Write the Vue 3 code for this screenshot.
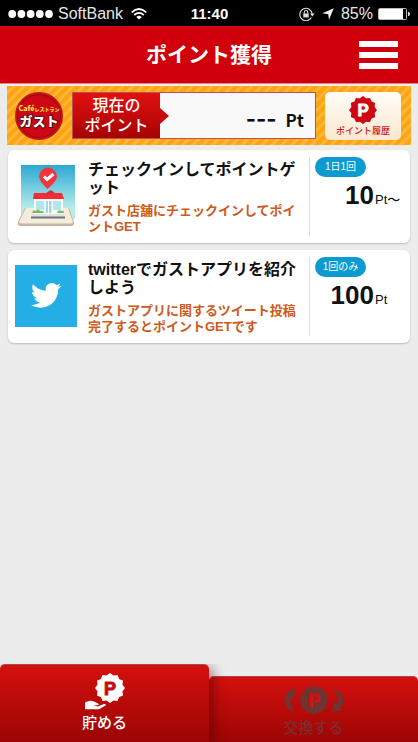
<script setup>
function seal(cx, cy, outer, inner, count) {
  const at = (r, a) => `${(cx + r * Math.sin(a)).toFixed(2)} ${(cy - r * Math.cos(a)).toFixed(2)}`
  const step = (Math.PI * 2) / count
  let d = `M${at(inner, -step / 2)}`
  for (let i = 0; i < count; i++) {
    const a = i * step
    d += `Q${at(outer - 0.9, a - step * 0.18)} ${at(outer, a)}Q${at(outer - 0.9, a + step * 0.18)} ${at(inner, a + step / 2)}`
  }
  return d + 'Z'
}
const sealPath = seal(15, 15, 15, 12.9, 12)

const offers = [
  {
    kind: 'shop',
    title: 'チェックインしてポイントゲット',
    text: 'ガスト店舗にチェックインしてポイントGET',
    limit: '1日1回',
    points: '10',
    unit: 'Pt〜',
  },
  {
    kind: 'twitter',
    title: 'twitterでガストアプリを紹介しよう',
    text: 'ガストアプリに関するツイート投稿完了するとポイントGETです',
    limit: '1回のみ',
    points: '100',
    unit: 'Pt',
  },
]
</script>

<template>
  <div class="screen">
    <div class="status">
      <div class="carrier">
        <svg class="dots" viewBox="0 0 45 8" aria-hidden="true">
          <circle v-for="n in 5" :key="n" :cx="n * 9.2 - 5" cy="4" r="3.9" fill="#fff" />
        </svg>
        <span>SoftBank</span>
        <svg class="wifi" viewBox="0 0 16 12" fill="none" stroke="#fff" stroke-width="1.7" aria-hidden="true">
          <path d="M.7 4.4Q8-2.4 15.3 4.4M3.2 7Q8 2.6 12.8 7" />
          <path d="M8 11.6 5.3 8.9Q8 6.7 10.7 8.9Z" fill="#fff" stroke="none" />
        </svg>
      </div>
      <div class="clock">11:40</div>
      <div class="power">
        <svg class="lock" viewBox="0 0 16 14" fill="none" stroke="#ddd" aria-hidden="true">
          <path d="M12.4 10.6A6.2 6.2 0 1 1 13.2 7" stroke-width="1.1" />
          <path d="M11 6.4h4.6L13.3 9.4Z" fill="#ddd" stroke="none" />
          <path d="M4.3 6.4h5.4v4H4.3Z" fill="#ddd" stroke="none" />
          <path d="M5.3 6.6V5.2a1.7 1.7 0 0 1 3.4 0v1.4" stroke-width="1.1" />
        </svg>
        <svg class="arrow" viewBox="0 0 12 12" aria-hidden="true"><path d="M11.8.3 7 11.8 6.2 6.2.3 5.3Z" fill="#eee" /></svg>
        <span>85%</span>
        <svg class="battery" viewBox="0 0 33 12" aria-hidden="true">
          <rect x=".5" y=".5" width="28" height="11" rx="1" fill="none" stroke="#bbb" />
          <rect x="1" y="1" width="24" height="10" fill="#fff" />
          <path d="M30 3.8q2 .4 2 2.2t-2 2.2Z" fill="#ddd" />
        </svg>
      </div>
    </div>

    <header class="bar">
      <h1>ポイント獲得</h1>
      <button class="menu" type="button" aria-label="メニュー"><i></i><i></i><i></i></button>
    </header>

    <main>
      <section class="balance">
        <div class="brand">
          <div class="brand-small"><b>Café</b><span>レストラン</span></div>
          <div class="brand-name">ガスト</div>
        </div>
        <div class="meter">
          <div class="label">現在の<br />ポイント</div>
          <div class="value"><b>---</b><span>Pt</span></div>
        </div>
        <button class="history" type="button">
          <svg viewBox="0 0 30 30" aria-hidden="true">
            <path :d="sealPath" fill="#cf0614" />
            <text x="15" y="21.5" text-anchor="middle" class="p" fill="#fffaf0" stroke="#fffaf0">P</text>
          </svg>
          <span>ポイント履歴</span>
        </button>
      </section>

      <article v-for="offer in offers" :key="offer.kind" class="card">
        <svg v-if="offer.kind === 'shop'" class="thumb" viewBox="0 0 62 62" aria-hidden="true">
          <defs>
            <linearGradient id="sky" x2="0" y2="1">
              <stop stop-color="#2ba9d3" /><stop offset=".8" stop-color="#b9ece9" />
            </linearGradient>
          </defs>
          <rect x="6" y="0" width="54" height="54" fill="url(#sky)" />
          <path d="M10 43h44l5 14q.5 4-3 4H6q-4 0-3-4Z" fill="#c5b3a0" />
          <path d="M11 43h42l5 14q0 1.5-2 1.5H6q-2 0-2-1.5Z" fill="#f4eddb" />
          <path d="M17 49h32l1 4H16Z" fill="#e2e2e2" />
          <path d="M16 51.5h34v2H16Z" fill="#6c7377" />
          <path d="M19 33h29v16H19Z" fill="#f5fbfb" />
          <path d="M21 36h8v9h-8ZM38 36h8v9h-8Z" fill="#b7e5ee" />
          <path d="M31 36h5.5v12H31Z" fill="#9edbe7" />
          <path d="M33.5 35v14" stroke="#fff" />
          <path d="M19 28h28l2 6H18Z" fill="#f02c35" />
          <path d="M31 28l5-3 4 3Z" fill="#cf3038" />
          <path d="M17 48q1-4 4-2 2-3 4 0 4-1 4 2ZM42 48q1-4 4-2 3-1 3 2Z" fill="#79bd60" />
          <path d="M32.5 24Q24 16 24 11.5a9 9 0 0 1 18 0Q42 16 32.5 24Z" fill="#f2353d" />
          <path d="m29 11.5 3 3 6.5-5.5" fill="none" stroke="#fff" stroke-width="3" />
        </svg>
        <svg v-else class="thumb" viewBox="0 0 62 62" aria-hidden="true">
          <rect width="62" height="62" fill="#23aee5" />
          <g transform="translate(16 15.3) scale(1.26)">
            <path fill="#fff" d="M23.954 4.569a10 10 0 0 1-2.825.775 4.958 4.958 0 0 0 2.163-2.723c-.951.555-2.005.959-3.127 1.184a4.92 4.92 0 0 0-8.384 4.482C7.691 8.094 4.066 6.13 1.64 3.161a4.822 4.822 0 0 0-.666 2.475c0 1.71.87 3.213 2.188 4.096a4.904 4.904 0 0 1-2.228-.616v.061a4.923 4.923 0 0 0 3.946 4.827 4.996 4.996 0 0 1-2.212.085 4.937 4.937 0 0 0 4.604 3.417 9.868 9.868 0 0 1-6.102 2.105c-.39 0-.779-.023-1.17-.067a13.995 13.995 0 0 0 7.557 2.209c9.054 0 13.999-7.496 13.999-13.986 0-.209 0-.42-.015-.63a9.936 9.936 0 0 0 2.46-2.548Z" />
          </g>
        </svg>
        <div class="copy">
          <h2>{{ offer.title }}</h2>
          <p>{{ offer.text }}</p>
        </div>
        <div class="reward">
          <span class="limit">{{ offer.limit }}</span>
          <div class="amount"><b>{{ offer.points }}</b><span>{{ offer.unit }}</span></div>
        </div>
      </article>
    </main>

    <nav class="tabs">
      <a href="#save" class="tab active">
        <svg class="save-icon" viewBox="0 0 40 37" aria-hidden="true">
          <g transform="translate(10 0)">
            <path :d="sealPath" fill="#fff" />
            <text x="15" y="21.5" text-anchor="middle" class="p" fill="#c80d0e" stroke="#c80d0e">P</text>
          </g>
          <path d="M0 29.5Q5 26.5 9 28.5L13 30.5Q15 32 12 32.3L8.5 32 12.5 33.5 19 31Q22 30.5 20.5 32.5L14 36.3H0Z" fill="#fff" />
        </svg>
        <span>貯める</span>
      </a>
      <a href="#exchange" class="tab">
        <svg class="swap-icon" viewBox="0 0 60 30" aria-hidden="true">
          <g transform="translate(15 0)">
            <path :d="sealPath" fill="#6f3332" />
            <text x="15" y="21.5" text-anchor="middle" class="p" fill="#d0100e" stroke="#d0100e">P</text>
          </g>
          <path d="M1 6 12 4 9.5 15 7.5 12Q4.5 19 11 27 2 24.5 .6 17 0 11 4 7.5Z" fill="#6f3332" />
          <path d="M59 25 48 27 50.5 16 52.5 19Q55.5 12 49 4 58 6.5 59.4 14 60 20 56 23.5Z" fill="#6f3332" />
        </svg>
        <span>交換する</span>
      </a>
    </nav>
  </div>
</template>

<style>
body {
  background: #ececec;
}
</style>

<style scoped>
* {
  box-sizing: border-box;
}
h1, h2, p {
  margin: 0;
}
button {
  border: 0;
  padding: 0;
  background: none;
  font: inherit;
}
svg {
  display: block;
  flex: none;
}
.screen {
  display: flex;
  flex-direction: column;
  min-height: 100vh;
  background: #ececec;
  color: #111;
  font-family: "Liberation Sans", "Noto Sans CJK JP", sans-serif;
}
.status {
  display: grid;
  grid-template-columns: 1fr auto 1fr;
  align-items: center;
  height: 26px;
  padding: 2px 7px 0 8px;
  background: #000;
  color: #e6e6e6;
  font-size: 16px;
  line-height: 24px;
}
.carrier, .power {
  display: flex;
  align-items: center;
  gap: 5px;
}
.carrier span {
  margin-right: 3px;
}
.power {
  justify-content: flex-end;
  gap: 7px;
}
.dots { width: 45px; height: 8px; }
.wifi { width: 16px; height: 12px; }
.lock { width: 16px; height: 14px; }
.arrow { width: 12px; height: 12px; }
.battery { width: 33px; height: 12px; margin-left: -2px; }
.clock {
  color: #fff;
  font-size: 15px;
  font-weight: bold;
}
.bar {
  display: grid;
  grid-template-columns: 1fr auto 1fr;
  align-items: center;
  height: 58px;
  padding: 0 20px;
  border-bottom: 1px solid #dd8589;
  background: #cf000c;
}
h1 {
  grid-column: 2;
  color: #fff;
  font-size: 21px;
  font-weight: bold;
  line-height: 30px;
}
.menu {
  display: flex;
  flex-direction: column;
  justify-self: end;
  gap: 5px;
  width: 39px;
}
.menu i {
  height: 6px;
  background: #fff;
}
main {
  flex: 1;
  display: flex;
  flex-direction: column;
  gap: 7px;
  padding: 2px 8px 16px;
}
.balance {
  display: flex;
  align-items: center;
  gap: 9px;
  height: 59px;
  margin: 0 -1px -2px;
  padding: 0 10px 0 8px;
  background: repeating-linear-gradient(135deg, #ffa30f 0 3px, #ffb63c 4px 6px, #ffa30f 7px);
}
.brand {
  display: flex;
  flex-direction: column;
  align-items: center;
  flex: none;
  width: 48px;
  height: 48px;
  padding-top: 10px;
  border: 2px solid #c81019;
  border-radius: 50%;
  background: #cf0614;
  box-shadow: inset 0 0 0 1px #8f0d12;
  font-family: "Noto Sans CJK JP", sans-serif;
  font-weight: 900;
  white-space: nowrap;
}
.brand-small {
  display: flex;
  align-items: baseline;
  color: #ffe23c;
  font-size: 5px;
  line-height: 8px;
}
.brand-small b {
  font-size: 7px;
  font-weight: 900;
}
.brand-name {
  color: #fff;
  font-size: 13px;
  line-height: 16px;
  -webkit-text-stroke: 2px #5e1010;
  paint-order: stroke fill;
}
.meter {
  flex: 1;
  display: flex;
  height: 47px;
  border: 1px solid #b9505a;
  background: #f9f9f9;
}
.label {
  position: relative;
  width: 87px;
  padding-top: 3px;
  background: linear-gradient(#e31010, #a50303);
  color: #fff;
  font-size: 16px;
  font-weight: 500;
  line-height: 20px;
  text-align: center;
}
.label::after {
  content: "";
  position: absolute;
  top: 15px;
  left: 100%;
  border: solid transparent;
  border-width: 8px 0 8px 9px;
  border-left-color: #c90b10;
}
.value {
  flex: 1;
  display: flex;
  justify-content: flex-end;
  align-items: baseline;
  gap: 9px;
  padding: 12px 11px 0 0;
  line-height: 28px;
}
.value b {
  font-family: Inter, sans-serif;
  font-size: 22px;
}
.value span {
  font-family: "Noto Sans CJK JP", sans-serif;
  font-size: 17px;
  font-weight: bold;
}
.history {
  display: flex;
  flex-direction: column;
  align-items: center;
  width: 76px;
  height: 48px;
  padding-top: 4px;
  border-radius: 5px;
  background: linear-gradient(#fffdf8, #fce8d0);
  color: #cf1420;
  font-size: 9px;
  font-weight: 500;
  line-height: 14px;
}
.history svg { width: 28px; height: 28px; }
.p {
  font-family: "Liberation Sans", sans-serif;
  font-size: 18px;
  font-weight: bold;
  stroke-width: 1px;
}
.card {
  display: flex;
  min-height: 93px;
  padding: 7px 8px 7px 7px;
  border-radius: 6px;
  background: #fff;
  box-shadow: 0 1px 2px #bbb;
}
.thumb {
  width: 62px;
  height: 62px;
  margin-top: 8px;
}
.copy {
  flex: 1;
  padding: 4px 0 0 11px;
}
h2 {
  font-size: 16px;
  font-weight: bold;
  line-height: 18px;
}
.copy p {
  margin-top: 6px;
  color: #cd5a20;
  font-size: 13px;
  font-weight: bold;
  line-height: 16px;
}
.reward {
  width: 93px;
  margin-left: 4px;
  padding-left: 5px;
  border-left: 1px solid #ddd;
}
.limit {
  display: block;
  width: 51px;
  border-radius: 10px;
  background: #0b9bd0;
  color: #fff;
  font-size: 10px;
  line-height: 20px;
  text-align: center;
}
.amount {
  display: grid;
  grid-template-columns: 59px auto;
  align-items: baseline;
  justify-content: start;
  gap: 1px;
  margin-top: 3px;
  line-height: 30px;
}
.amount b {
  font-size: 26px;
  text-align: right;
}
.amount span {
  font-size: 13px;
  font-weight: 500;
  white-space: nowrap;
}
.tabs {
  display: grid;
  grid-template-columns: 1fr 1fr;
  align-items: end;
}
.tab {
  display: flex;
  flex-direction: column;
  align-items: center;
  height: 66px;
  padding-top: 8px;
  border-top: 1px solid #a64a4a;
  border-radius: 5px 5px 0 0;
  background: linear-gradient(#d4100d, #9c0504);
  color: #7a302f;
  font-size: 15px;
  font-weight: 500;
  line-height: 26px;
  text-decoration: none;
}
.tab.active {
  position: relative;
  height: 78px;
  color: #fff;
  box-shadow: 3px 4px 14px #40000099;
  clip-path: inset(0 -20px 0 0);
}
.save-icon { width: 40px; height: 37px; }
.swap-icon { width: 60px; height: 30px; }
</style>
